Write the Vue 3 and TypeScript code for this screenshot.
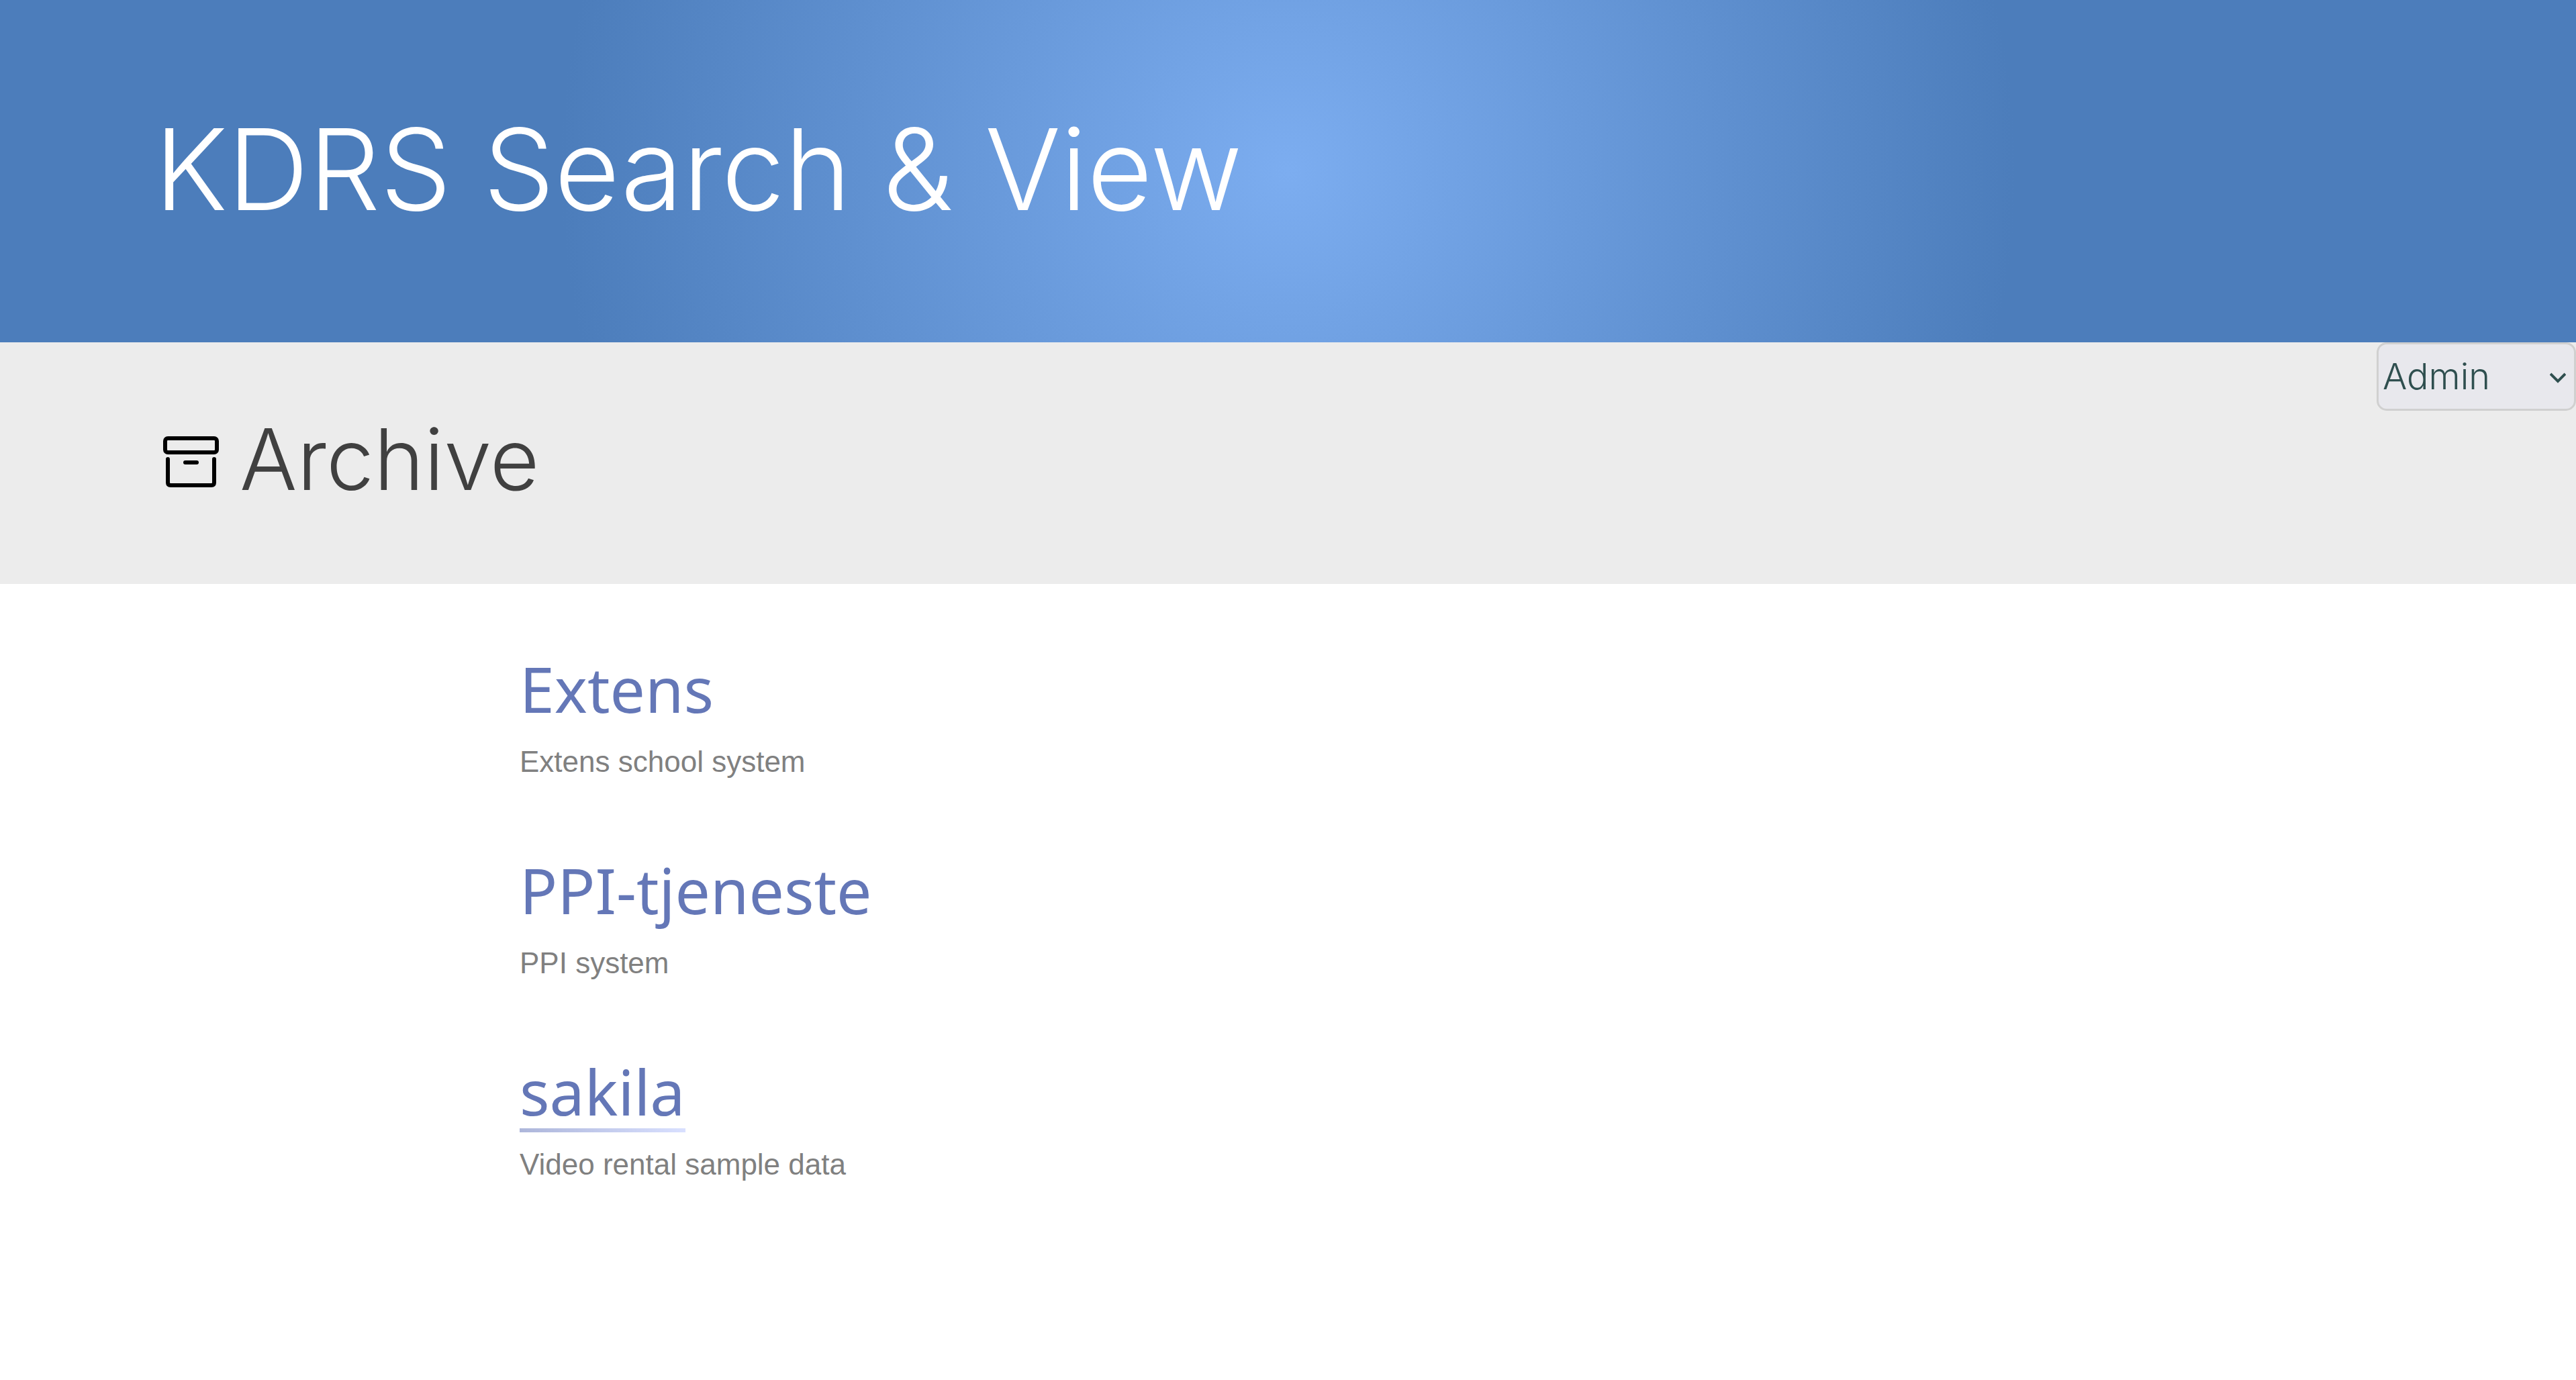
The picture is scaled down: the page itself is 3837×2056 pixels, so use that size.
<script setup lang="ts">
import { ref } from 'vue'

interface Archive {
  name: string
  description: string
}

const archives: Archive[] = [
  { name: 'Extens', description: 'Extens school system' },
  { name: 'PPI-tjeneste', description: 'PPI system' },
  { name: 'sakila', description: 'Video rental sample data' },
]

const active = ref('sakila')
const role = ref('Admin')
</script>

<template>
  <div class="page">
    <header class="banner">
      <h1 class="brand">KDRS Search &amp; View</h1>
    </header>

    <section class="subheader">
      <div class="heading">
        <svg class="heading-icon" viewBox="0 0 84 76" fill="none" stroke="#000" stroke-width="6" stroke-linecap="round" stroke-linejoin="round" aria-hidden="true">
          <rect x="3" y="3" width="77" height="21" rx="4" />
          <path d="M7 34v35q0 4 4 4h61q4 0 4-4V34" />
          <path d="M33 39h17" />
        </svg>
        <h2 class="title">Archive</h2>
      </div>
      <div class="role">
        <select v-model="role" class="role-select" aria-label="Role">
          <option>Admin</option>
        </select>
        <svg class="role-arrow" viewBox="0 0 24 16" fill="none" stroke="#2f4f4f" stroke-width="4" aria-hidden="true">
          <path d="M1 2l11 11L23 2" />
        </svg>
      </div>
    </section>

    <main>
      <ul class="archives">
        <li v-for="item in archives" :key="item.name" class="archive">
          <a href="#" class="archive-link" :class="{ active: item.name === active }" @mouseenter="active = item.name">{{ item.name }}</a>
          <p class="archive-text">{{ item.description }}</p>
        </li>
      </ul>
    </main>
  </div>
</template>

<style>
body {
  margin: 0;
  background: #fff;
}
</style>

<style scoped>
.banner {
  display: flex;
  align-items: center;
  box-sizing: border-box;
  height: 510px;
  padding: 0 0 6px 6%;
  background: radial-gradient(circle, #7cadf0 0%, #4c7dbb 56%);
}

.brand {
  margin: 0;
  font: 300 168px/200px Inter, sans-serif;
  color: #fff;
}

.subheader {
  display: flex;
  justify-content: space-between;
  align-items: flex-start;
  height: 360px;
  padding-left: 243px;
  background: #ececec;
}

.heading {
  display: flex;
  align-items: center;
  gap: 30px;
  padding-top: 98px;
}

.heading-icon {
  width: 84px;
  height: 76px;
  padding-top: 8px;
}

.title {
  margin: 0;
  font: 300 127px/152px Inter, sans-serif;
  color: #404040;
}

.role {
  position: relative;
}

.role-select {
  display: block;
  width: 297px;
  height: 102px;
  margin: 0;
  padding: 0 48px 0 6px;
  appearance: none;
  border: 3px solid #d0d0d0;
  border-radius: 15px;
  background: #e8e8ed;
  font: 300 54px/60px Inter, sans-serif;
  color: #2f4f4f;
}

.role-arrow {
  position: absolute;
  top: 45px;
  right: 15px;
  width: 24px;
  height: 16px;
  pointer-events: none;
}

.archives {
  display: flex;
  flex-direction: column;
  gap: 60px;
  margin: 0;
  padding: 90px 0 90px 774px;
  list-style: none;
}

.archive {
  display: flex;
  flex-direction: column;
  align-items: flex-start;
  gap: 22px;
  height: 240px;
}

.archive-link {
  height: 121px;
  border-bottom: 6px solid transparent;
  font: 400 93px/132px "Noto Sans", sans-serif;
  color: #6477b7;
  text-decoration: none;
}

.archive-link.active {
  border-image: linear-gradient(to right, #adb6da, #d9e0ff) 1;
}

.archive-text {
  margin: 0;
  font: 400 44px/51px "Liberation Sans", Arial, sans-serif;
  color: #808080;
}
</style>
